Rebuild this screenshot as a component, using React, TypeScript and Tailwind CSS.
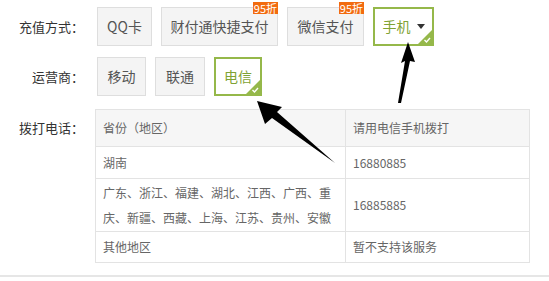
import React from "react";

type OptProps = {
  label: string;
  w: string;
  selected?: boolean;
  badge?: boolean;
  caret?: boolean;
};

function Opt({ label, w, selected, badge, caret }: OptProps) {
  return (
    <div
      className={
        "relative h-[39px] flex items-center justify-center text-[14px] " +
        w +
        (selected
          ? " border-2 border-[#95b84a] bg-white text-[#7fa334]"
          : " border border-[#dedede] bg-[#f4f4f4] text-[#555]")
      }
    >
      <span>{label}</span>
      {caret && (
        <svg width="8" height="5" viewBox="0 0 8 5" className="ml-[6px]">
          <polygon points="0,0 8,0 4,5" fill="#333" />
        </svg>
      )}
      {badge && (
        <span className="absolute right-[-1px] top-[-6px] bg-[#f26b0f] text-white text-[11px] leading-[12px] px-[1px]">
          95折
        </span>
      )}
      {selected && (
        <svg width="14" height="14" viewBox="0 0 14 14" className="absolute right-0 bottom-0">
          <polygon points="14,0 14,14 0,14" fill="#95b84a" />
          <polyline points="6.5,10 8.5,12 12,8" fill="none" stroke="#fff" strokeWidth="1.4" />
        </svg>
      )}
    </div>
  );
}

export default function App() {
  return (
    <div className="relative w-[549px] h-[281px] bg-white overflow-hidden font-['Noto_Sans_CJK_SC','Microsoft_YaHei',sans-serif]">
      <div className="pt-[7px]">
        <div className="flex items-center">
          <div className="w-[84px] text-right text-[13px] text-[#333]">充值方式：</div>
          <div className="ml-[13px] flex gap-[9px]">
            <Opt label="QQ卡" w="w-[55px]" />
            <Opt label="财付通快捷支付" w="w-[117px]" badge />
            <Opt label="微信支付" w="w-[77px]" badge />
            <Opt label="手机" w="w-[61px]" selected caret />
          </div>
        </div>
        <div className="mt-[11px] flex items-center">
          <div className="w-[84px] text-right text-[13px] text-[#333]">运营商：</div>
          <div className="ml-[13px] flex gap-[9px]">
            <Opt label="移动" w="w-[49px]" />
            <Opt label="联通" w="w-[50px]" />
            <Opt label="电信" w="w-[48px]" selected />
          </div>
        </div>
        <div className="mt-[13px] flex items-start">
          <div className="w-[84px] h-[37px] flex items-center justify-end text-[13px] text-[#333]">拨打电话：</div>
          <table className="ml-[11px] border-collapse border border-[#e3e3e3] text-[12px] text-[#666]">
            <tbody>
              <tr className="bg-[#f6f6f6] h-[37px]">
                <td className="w-[250px] border border-[#e3e3e3] px-[7px]">省份（地区）</td>
                <td className="w-[184px] border border-[#e3e3e3] px-[7px]">请用电信手机拨打</td>
              </tr>
              <tr className="h-[32px]">
                <td className="border border-[#e3e3e3] px-[7px]">湖南</td>
                <td className="border border-[#e3e3e3] px-[7px]">16880885</td>
              </tr>
              <tr className="h-[53px]">
                <td className="border border-[#e3e3e3] px-[7px] leading-[25px]">
                  广东、浙江、福建、湖北、江西、广西、重庆、新疆、西藏、上海、江苏、贵州、安徽
                </td>
                <td className="border border-[#e3e3e3] px-[7px]">16885885</td>
              </tr>
              <tr className="h-[31px]">
                <td className="border border-[#e3e3e3] px-[7px]">其他地区</td>
                <td className="border border-[#e3e3e3] px-[7px]">暂不支持该服务</td>
              </tr>
            </tbody>
          </table>
        </div>
        <div className="mt-[12px] h-[2px] bg-[#e6e6e6]" />
      </div>
      <svg
        className="absolute inset-0 pointer-events-none"
        width="549"
        height="281"
        viewBox="0 0 549 281"
      >
        <polygon points="408,42 415,62 410,61 401,103 398,103 405,61 401,63" fill="#000" />
        <polygon points="257,101 282,107 277,112 335,163 272,118 265,124" fill="#000" />
      </svg>
    </div>
  );
}
